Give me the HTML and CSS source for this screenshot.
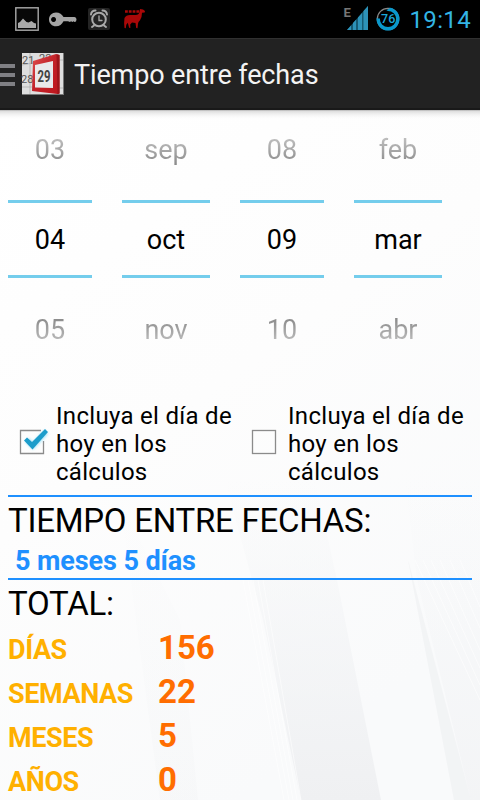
FILE: index.html
```html
<!DOCTYPE html>
<html lang="es">
<head>
<meta charset="utf-8">
<title>Tiempo entre fechas</title>
<link rel="stylesheet" href="styles.css">
</head>
<body>
<div class="statusbar">
  <svg class="status-icons" width="160" height="38" viewBox="0 0 160 38">
    <rect x="15.8" y="7.8" width="22.4" height="22.4" fill="#080808" stroke="#a9a9a9" stroke-width="1.4"/>
    <path d="M18 28v-5l2-1 3-3.500 3.500 3.500 2 .5 3-1.500 2.500 2 2 .5v4.500z" fill="#aaa"/>
    <path fill-rule="evenodd" d="M56 12.500c3.500 0 6 2 7.500 4.500h11q2 0 2 2.500t-2 2.500l-1-.8-1 .8-1.500-.8-1 .8-2-.8h-4.500c-1.500 3-4 5-7.500 5-4 0-7-3-7-6.800s3-6.900 7-6.900zM53.500 17a2.500 2.500 0 1 0 .1 0z" fill="#a4a4a4"/>
    <rect x="88" y="8" width="22" height="22" rx="2" fill="#242424"/>
    <g fill="none" stroke="#aaa" stroke-width="2" stroke-linecap="round">
      <circle cx="99" cy="19.500" r="6.800"/><path d="M91 14.500q.5-4 4.500-4M107 14.500q-.5-4-4.500-4M94 25.500l-2 1.500M104 25.500l2 1.500"/>
      <path d="M99 16v4.500h3" stroke-width="1.300"/>
    </g>
    <path d="M124.500 18q1.500-3 5.500-3h5.500q3.500 0 4-3l.5-3 3 .5 2 1.500-.3 1.500-2.700.3q0 5-2 7.500-2 1.500-2 3.500l-.5 4.500-1.300-.2-.7-5-3.500-.5-1.800 2 .2 3.500-1.300-.3-1.300-5-1.500 2-.5 3.500-1.300-.2q-.8-5 0-10z" fill="#a90808"/>
    <path d="M125 11.500h14.500" stroke="#a90808" stroke-width="2.500" stroke-dasharray="2.800 1"/>
  </svg>
  <div class="status-right">
    <svg width="66" height="38" viewBox="0 0 66 38">
      <text x=".5" y="17" class="net">E</text>
      <path d="M4 30L25 6v24z" fill="#155a73"/>
      <path d="M4 30l4-4.600V30zM10 30v-7l3-3.300V30zM15 30V17.500l4-4.500V30zM20.500 30V11L25 6v24z" fill="#2d92b8"/>
      <circle cx="45" cy="19" r="10.700" fill="none" stroke="#888" stroke-width="1.200"/>
      <circle cx="45" cy="19" r="9.800" fill="none" stroke="#0998cc" stroke-width="3.400" pathLength="100" stroke-dasharray="76 24" transform="rotate(-90 45 19)"/>
      <text x="45.200" y="23.300" class="battery">76</text>
    </svg>
    <span class="clock">19:14</span>
  </div>
</div>
<header class="actionbar">
  <div class="menu"><i></i><i></i><i></i></div>
  <svg class="app-icon" width="44" height="44" viewBox="0 0 44 44">
    <defs>
      <linearGradient id="red" x1="0" y1="0" x2="1" y2="1"><stop offset="0" stop-color="#e05050"/><stop offset=".45" stop-color="#c3242b"/><stop offset="1" stop-color="#bd151c"/></linearGradient>
    </defs>
    <rect x="1" y="1" width="42" height="42" fill="#777"/>
    <rect x="1" y="1" width="41" height="41" fill="#dedede"/>
    <path d="M1 13l11-2M1 35h10M9 1v41M38 8h4M38 36h4" stroke="#aaa" stroke-width=".7"/>
    <text x="1" y="12" class="cal-small">21</text>
    <text x="18" y="9.500" class="cal-small">22</text>
    <text x="0" y="31" class="cal-small">28</text>
    <path d="M12 9L35 2l3.500 1v38.500l-2 .5L11 39z" fill="url(#red)"/>
    <path d="M35.500 2.200l3 .8v38.500l-2 .5z" fill="#9c151b"/>
    <path d="M14 13l18-4v27l-18-.5z" fill="#e9e9eb"/>
    <text x="23" y="29.500" class="cal-day" textLength="13" lengthAdjust="spacingAndGlyphs">29</text>
  </svg>
  <h1>Tiempo entre fechas</h1>
</header>
<main>
  <svg class="backdrop" width="480" height="690" viewBox="0 110 480 690">
    <defs>
      <linearGradient id="page" x1="0" y1="0" x2=".5" y2="1"><stop offset="0" stop-color="#fff"/><stop offset=".5" stop-color="#fdfdfd"/><stop offset="1" stop-color="#f9fafb"/></linearGradient>
      <linearGradient id="ray" gradientUnits="userSpaceOnUse" x1="0" y1="480" x2="0" y2="800"><stop offset="0" stop-color="#f1f3f5" stop-opacity="0"/><stop offset="1" stop-color="#eff0f2"/></linearGradient>
      <linearGradient id="shade" x1="0" y1="0" x2="0" y2="1"><stop offset="0" stop-color="#b4b4b4"/><stop offset=".15" stop-color="#e0e0e0"/><stop offset="1" stop-color="#fff" stop-opacity="0"/></linearGradient>
    </defs>
    <path d="M0 110h480v690H0z" fill="url(#page)"/>
    <path d="M225 480h90L337 580l44 220h-80l-38-180z" fill="url(#ray)"/>
    <path d="M405 480h75v320h-9l-54-220z" fill="url(#ray)" opacity=".6"/>
    <path d="M408 560l63 240h-17z" fill="#eceef0" opacity=".5"/>
    <path d="M120 500l60 120 18 180h-38z" fill="url(#ray)" opacity=".25"/>
    <g stroke="#fff" stroke-opacity=".7" stroke-width=".8" fill="none">
      <path d="M243 580l41 220M248 580l41 220M253 580l40 220M258 580l39 220M263 580l38 220"/>
      <path d="M415 560l65 140M423 560l57 125M431 560l49 108M440 560l40 90M450 560l30 68M460 560l20 47"/>
    </g>
    <path d="M0 110h480v10H0z" fill="url(#shade)"/>
  </svg>
  <section class="pickers">
    <div class="picker"><span class="before">03</span><span class="current">04</span><span class="after">05</span></div>
    <div class="picker wide"><span class="before">sep</span><span class="current">oct</span><span class="after">nov</span></div>
    <div class="picker"><span class="before">08</span><span class="current">09</span><span class="after">10</span></div>
    <div class="picker wide"><span class="before">feb</span><span class="current">mar</span><span class="after">abr</span></div>
  </section>
  <section class="options">
    <div class="option">
      <svg width="48" height="48" viewBox="0 0 48 48">
        <defs><filter id="glow" x="-50%" y="-50%" width="200%" height="200%"><feGaussianBlur stdDeviation="1.800"/></filter></defs>
        <path d="M43.500 23v12.500h-23v-23H41" transform="translate(-8 0)" fill="none" stroke="#8b8b8b" stroke-width="1.300"/>
        <path d="M19 22l6 6L38 14" fill="none" stroke="#7cd7f7" stroke-width="5" opacity=".8" filter="url(#glow)"/>
        <path d="M16 22.500l3-3 5 4.500L37 11l3 3-15.500 17.500z" fill="#1c9dcb"/>
      </svg>
      <p>Incluya el día de hoy en los cálculos</p>
    </div>
    <div class="option">
      <svg width="48" height="48" viewBox="0 0 48 48"><rect x="12.500" y="12.500" width="23" height="23" fill="none" stroke="#8b8b8b" stroke-width="1.300"/></svg>
      <p>Incluya el día de hoy en los cálculos</p>
    </div>
  </section>
  <section class="result">
    <h2 class="between">TIEMPO ENTRE FECHAS:</h2>
    <p>5 meses 5 días</p>
  </section>
  <section class="totals">
    <h2>TOTAL:</h2>
    <dl>
      <dt>DÍAS</dt><dd>156</dd>
      <dt>SEMANAS</dt><dd>22</dd>
      <dt>MESES</dt><dd>5</dd>
      <dt>AÑOS</dt><dd>0</dd>
    </dl>
  </section>
</main>
</body>
</html>
```
FILE: styles.css
```css
* { box-sizing: border-box; }
body { margin: 0; width: 480px; height: 800px; overflow: hidden; background: #fdfdfd; color: #000; font-family: Roboto, "Noto Sans", sans-serif; }
h1, h2, p, dl, dd { margin: 0; font-weight: 400; }
svg { display: block; flex: none; }

.statusbar { height: 38px; background: #000; display: flex; justify-content: space-between; }
.status-right { display: flex; align-items: center; padding-right: 9px; }
.clock { color: #33b5e5; font-size: 24px; line-height: 38px; padding-top: 1px; letter-spacing: .35px; }
.net { font-size: 13px; font-weight: 700; fill: #777; }
.battery { font-size: 12.500px; font-weight: 500; fill: #1ba6d8; text-anchor: middle; }

.actionbar { height: 72px; background: #222; border-top: 1px solid #303030; border-bottom: 2px solid #191919; display: flex; align-items: center; }
.menu { width: 15px; display: flex; flex-direction: column; gap: 5px; margin-top: 3px; }
.menu i { height: 4px; background: #808084; }
.app-icon { margin-left: 6px; }
.cal-small { font-size: 11px; fill: #555; }
.cal-day { font-size: 17px; font-weight: 700; fill: #444; text-anchor: middle; }
.actionbar h1 { margin-left: 9px; padding-top: 2px; color: #f3f3f3; font-size: 27px; line-height: 36px; letter-spacing: -.13px; }

main { position: relative; height: 690px; padding: 0 8px; }
.backdrop { position: absolute; left: 0; top: 0; z-index: -1; }

.pickers { display: flex; gap: 30px; height: 272px; }
.picker { width: 84px; display: flex; flex-direction: column; text-align: center; font-size: 27px; }
.picker.wide { width: 88px; }
.before { height: 90px; line-height: 81px; color: transparent; background: linear-gradient(#c4c4c4 25px, #8c8c8c 54px); background-clip: text; -webkit-background-clip: text; }
.current { height: 78px; line-height: 75px; border: solid #74cdec; border-width: 3px 0; }
.after { height: 104px; line-height: 105px; color: transparent; background: linear-gradient(#8a8a8a 40px, #c0c0c0 65px); background-clip: text; -webkit-background-clip: text; }

.options { display: flex; height: 113px; padding-top: 20px; }
.option { width: 232px; height: 84px; display: flex; align-items: center; }
.option svg { margin-bottom: 4px; }
.option p { font-size: 24px; line-height: 28px; letter-spacing: .3px; }

.result { height: 85px; border: solid #1e90ff; border-width: 2px 0; }
h2 { font-size: 33px; line-height: 39px; padding-top: 4px; letter-spacing: -.25px; }
.result p { color: #1e90ff; font-size: 27px; font-weight: 700; line-height: 32px; padding: 5px 0 0 7px; letter-spacing: -.1px; }

.totals dl { display: grid; grid-template-columns: 150px 1fr; grid-auto-rows: 44px; align-items: baseline; padding-top: 5px; }
dt { color: #ffb000; font-size: 27px; font-weight: 700; letter-spacing: -.4px; }
dd { color: #ff6d00; font-size: 33px; font-weight: 700; line-height: 39px; }
```
